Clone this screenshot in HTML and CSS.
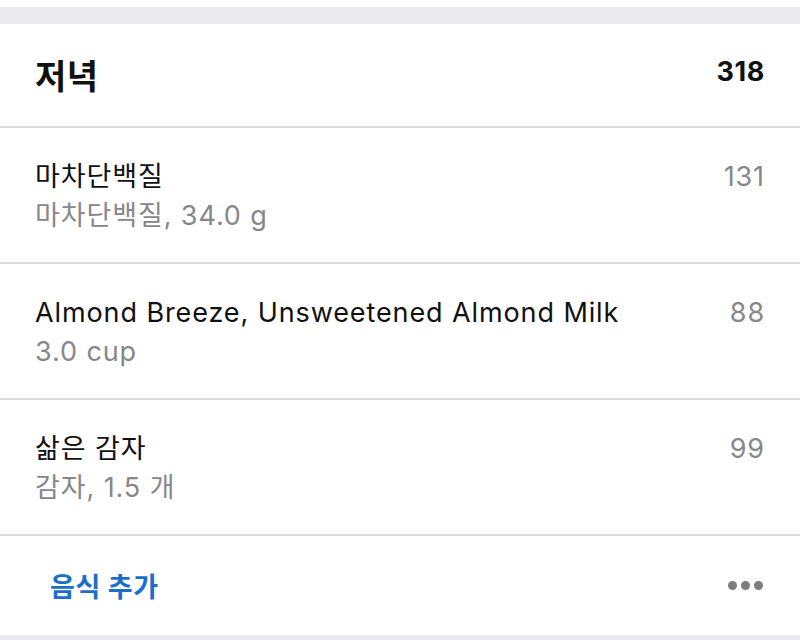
FILE: index.html
```html
<!DOCTYPE html>
<html lang="ko">
<head>
<meta charset="utf-8">
<link rel="stylesheet" href="styles.css">
</head>
<body>
<div class="page">
  <div class="band band-top"></div>
  <section class="card">
    <header class="card-head">
      <h1 class="meal">저녁</h1>
      <span class="total">318</span>
    </header>
    <div class="item">
      <div class="item-text">
        <div class="item-name">마차단백질</div>
        <div class="item-sub">마차단백질, 34.0 g</div>
      </div>
      <span class="item-cal">131</span>
    </div>
    <div class="item">
      <div class="item-text">
        <div class="item-name">Almond Breeze, Unsweetened Almond Milk</div>
        <div class="item-sub">3.0 cup</div>
      </div>
      <span class="item-cal">88</span>
    </div>
    <div class="item">
      <div class="item-text">
        <div class="item-name">삶은 감자</div>
        <div class="item-sub">감자, 1.5 개</div>
      </div>
      <span class="item-cal">99</span>
    </div>
    <footer class="card-foot">
      <span class="add">음식 추가</span>
      <span class="more"><i></i><i></i><i></i></span>
    </footer>
  </section>
  <div class="band band-bottom"></div>
</div>
</body>
</html>
```
FILE: styles.css
```css
html, body {
  margin: 0;
  padding: 0;
  background: #ffffff;
}
body {
  font-family: Inter, "Noto Sans CJK KR", sans-serif;
  color: #111111;
  width: 800px;
  height: 640px;
  overflow: hidden;
}
.page {
  padding-top: 7px;
}
.band {
  background: #e9e9ee;
}
.band-top {
  height: 17px;
}
.band-bottom {
  height: 10px;
}
.card {
  background: #fff;
}
.card-head {
  display: flex;
  align-items: center;
  justify-content: space-between;
  padding: 0 35px;
  border-bottom: 2px solid #d9d9dc;
  box-sizing: border-box;
  height: 104px;
}
.meal {
  margin: 0;
  font-size: 34px;
  font-weight: 700;
  line-height: 1;
  padding-top: 4px;
  letter-spacing: 0.5px;
}
.total {
  font-size: 27px;
  font-weight: 700;
  margin-top: -8px;
  letter-spacing: 0.6px;
}
.item {
  height: 136px;
  box-sizing: border-box;
  border-bottom: 2px solid #d9d9dc;
  display: flex;
  justify-content: space-between;
  align-items: flex-start;
  padding: 29px 35px 0 35px;
}
.item-name,
.item-sub,
.item-cal {
  font-size: 27px;
  line-height: 39px;
  letter-spacing: 0.9px;
}
.item-name {
  color: #111;
}
.item-sub {
  color: #87878b;
}
.item-cal {
  color: #87878b;
}
.card-foot {
  height: 99px;
  display: flex;
  align-items: center;
  justify-content: space-between;
  padding: 0 37px 0 50px;
}
.add {
  color: #1c6fc9;
  font-size: 27px;
  font-weight: 700;
  letter-spacing: 0.6px;
}
.more {
  display: flex;
  gap: 4px;
}
.more i {
  width: 9px;
  height: 9px;
  border-radius: 50%;
  background: #7d7d80;
}
```
